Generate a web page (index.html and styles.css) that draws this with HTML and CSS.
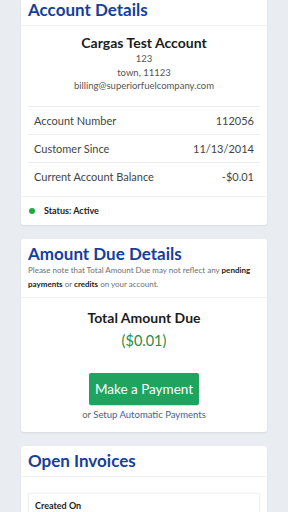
FILE: index.html
```html
<!DOCTYPE html>
<html>
<head>
  <title>Account</title>
  <link rel="stylesheet" href="styles.css">
</head>
<body>
  <div class="page">

    <!-- Account details -->
    <div class="card card-first">
      <div class="card-header">
        <h2>Account Details</h2>
      </div>
      <div class="card-body">
        <div class="account-name">Cargas Test Account</div>
        <div class="address">
          <div>123</div>
          <div>town, 11123</div>
          <div>billing@superiorfuelcompany.com</div>
        </div>
        <div class="info-table">
          <div class="info-row"><span>Account Number</span><span>112056</span></div>
          <div class="info-row"><span>Customer Since</span><span>11/13/2014</span></div>
          <div class="info-row"><span>Current Account Balance</span><span>-$0.01</span></div>
        </div>
      </div>
      <div class="card-footer">
        <span class="status-dot"></span>
        <span class="status-text">Status: Active</span>
      </div>
    </div>

    <!-- Amount due -->
    <div class="card">
      <div class="card-header">
        <h2>Amount Due Details</h2>
        <p class="note">Please note that Total Amount Due may not reflect any <b>pending payments</b> or <b>credits</b> on your account.</p>
      </div>
      <div class="card-body due">
        <div class="due-title">Total Amount Due</div>
        <div class="due-amount">($0.01)</div>
        <a href="#" class="pay-button">Make a Payment</a>
        <div class="auto-pay">or <a href="#">Setup Automatic Payments</a></div>
      </div>
    </div>

    <!-- Invoices -->
    <div class="card">
      <div class="card-header">
        <h2>Open Invoices</h2>
      </div>
      <div class="card-body">
        <div class="invoice-box">
          <div class="invoice-label">Created On</div>
        </div>
      </div>
    </div>

  </div>
</body>
</html>
```

FILE: styles.css
```css
/* Общие стили */
body {
  background-color: #e9ecf1;
  font-family: Lato, "Open Sans", sans-serif;
  margin: 0;
  color: #212529;
}

.page {
  padding: 0 21px;
}

/* Карточки */
.card {
  background-color: #fff;
  border-radius: 3px;
  box-shadow: 0 1px 2px rgba(0, 0, 0, 0.08);
  margin-bottom: 14px;
}

.card-first {
  margin-top: -5px;
  border-radius: 0 0 3px 3px;
}

.card-header {
  padding: 6px 7px;
  border-bottom: 1px solid #eef0f3;
}

.card-header h2 {
  margin: 0;
  font-size: 17px;
  line-height: 18px;
  color: #15409a;
}

.note {
  margin: 0;
  font-size: 8px;
  line-height: 14px;
  color: #6c6f73;
}

.note b {
  color: #222;
}

.card-body {
  padding: 8px 7px 5px;
}

/* Аккаунт */
.account-name {
  text-align: center;
  font-size: 14px;
  font-weight: bold;
  line-height: 18px;
  color: #1c1c1c;
}

.address {
  text-align: center;
  font-size: 9.5px;
  line-height: 13.5px;
  color: #555;
  margin-bottom: 13px;
}

.info-table {
  border-top: 1px solid #edeef0;
}

.info-row {
  display: flex;
  justify-content: space-between;
  padding: 0 6px;
  height: 27px;
  align-items: center;
  font-size: 11px;
  color: #444;
  border-bottom: 1px solid #edeef0;
}

.info-row:last-child {
  border-bottom: none;
  height: 28px;
}

.card-footer {
  display: flex;
  align-items: center;
  height: 28px;
  padding: 0 8px;
  border-top: 1px solid #eef0f3;
}

.status-dot {
  width: 6px;
  height: 6px;
  border-radius: 50%;
  background-color: #1eaa3c;
  margin-right: 9px;
}

.status-text {
  font-size: 9px;
  font-weight: bold;
  color: #222;
}

/* Сумма к оплате */
.due {
  text-align: center;
  padding: 10px 7px 10px;
}

.due-title {
  font-size: 14px;
  font-weight: bold;
  line-height: 20px;
  color: #1c1c1c;
}

.due-amount {
  font-size: 14.5px;
  line-height: 20px;
  margin-top: 3px;
  color: #2e8b3e;
}

.pay-button {
  display: inline-block;
  margin-top: 22px;
  width: 110px;
  height: 32px;
  line-height: 32px;
  background-color: #1fa35f;
  color: #fff;
  font-size: 13.5px;
  text-decoration: none;
  border-radius: 2px;
  box-shadow: 0 1px 1px rgba(0, 0, 0, 0.15);
}

.auto-pay {
  margin-top: 3px;
  font-size: 9.5px;
  line-height: 14px;
  color: #666;
}

.auto-pay a {
  color: #3f5d9b;
  text-decoration: none;
}

/* Счета */
.invoice-box {
  margin-top: 8px;
  border: 1px solid #f0f1f3;
  box-shadow: 0 0 2px rgba(0, 0, 0, 0.05);
  padding: 6px 6px 20px;
}

.invoice-label {
  font-size: 9px;
  font-weight: bold;
  color: #222;
}
```
